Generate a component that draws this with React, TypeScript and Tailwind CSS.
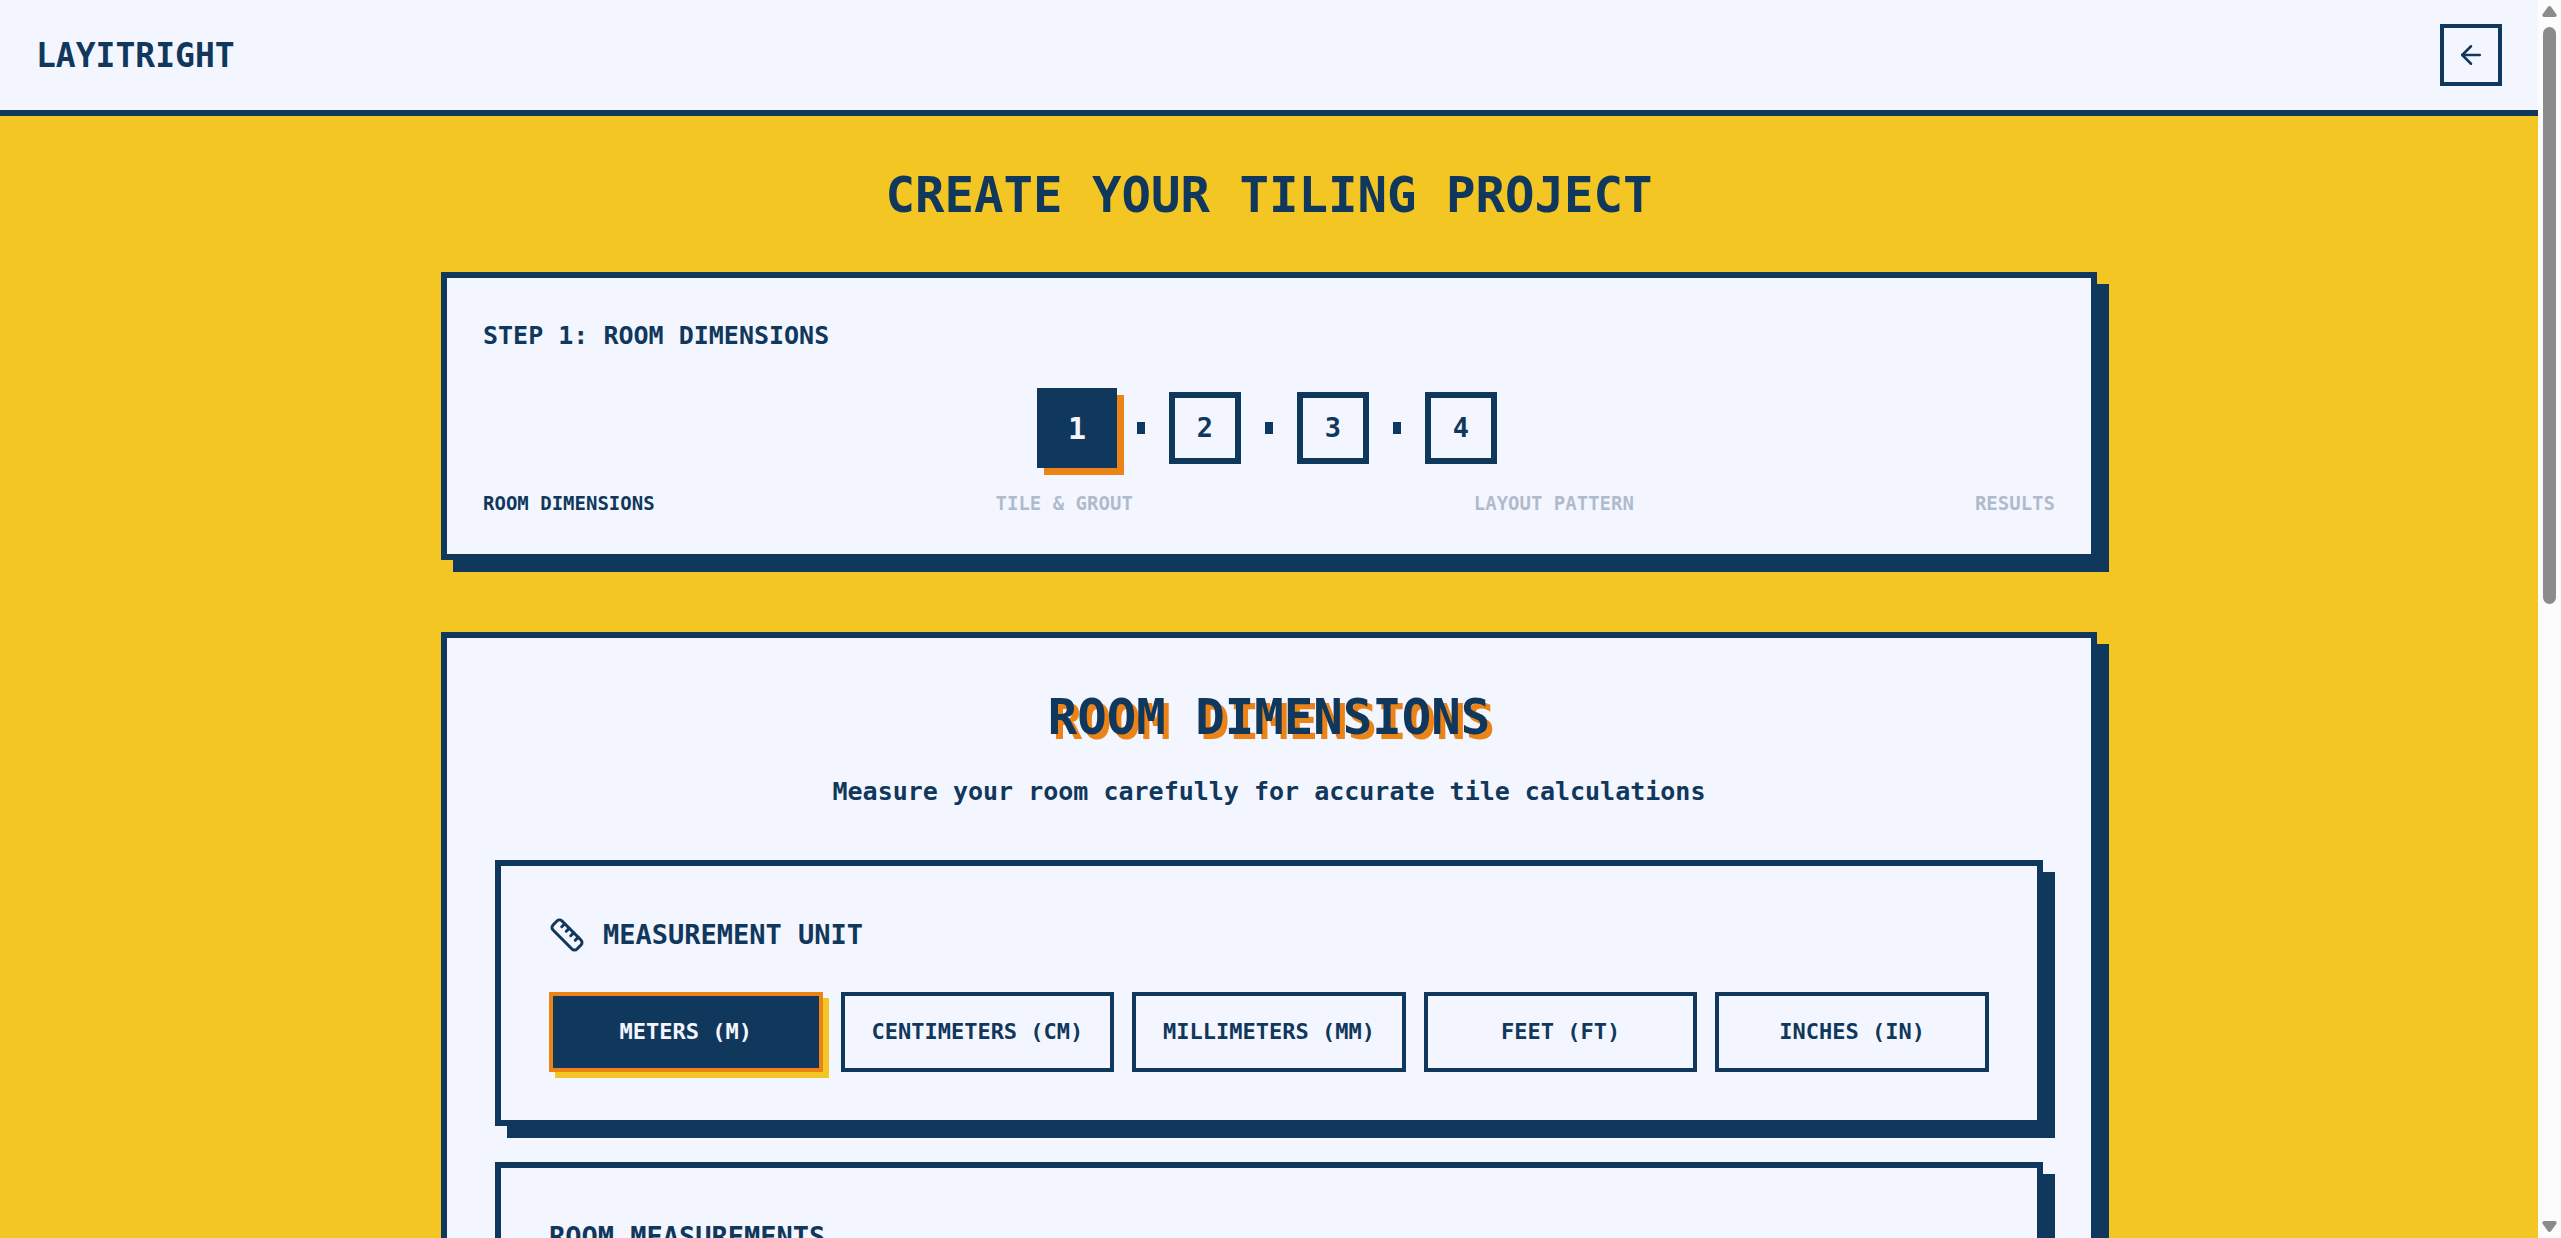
import { useState } from "react";
import { ArrowLeft, Ruler } from "lucide-react";
import clsx from "clsx";

const steps = ["Room Dimensions", "Tile & Grout", "Layout Pattern", "Results"];

const units = [
  "Meters (m)",
  "Centimeters (cm)",
  "Millimeters (mm)",
  "Feet (ft)",
  "Inches (in)",
];

const card = "border-6 border-[#10375c] bg-[#f4f6ff] shadow-[12px_12px_0_0_#10375c]";

function Header() {
  return (
    <header className="flex items-center justify-between border-b-6 border-[#10375c] bg-[#f4f6ff] px-9 py-6">
      <a href="#" className="pt-0.5 text-[33px] leading-[48px] font-bold uppercase">
        LayItRight
      </a>
      <button
        type="button"
        aria-label="Go back"
        className="flex size-[62px] items-center justify-center border-4 border-[#10375c]"
      >
        <ArrowLeft size={30} strokeWidth={2} />
      </button>
    </header>
  );
}

function Progress({ current, onSelect }: { current: number; onSelect: (n: number) => void }) {
  return (
    <section className={clsx(card, "p-9")}>
      <h2 className="text-[25px] leading-11 font-bold uppercase">
        Step {current + 1}: {steps[current]}
      </h2>
      <ol className="mt-[34px] flex items-center justify-center gap-6">
        {steps.map((step, i) => (
          <li key={step} className="flex items-center gap-6">
            {i > 0 && <span className="h-3 w-2 bg-[#10375c]" />}
            <button
              type="button"
              aria-label={step}
              onClick={() => onSelect(i)}
              className={clsx(
                "flex items-center justify-center border-6 border-[#10375c] font-bold",
                i === current
                  ? "-m-1 size-20 bg-[#10375c] text-[30px] text-[#f4f6ff] shadow-[7px_7px_0_0_#eb8317]"
                  : "size-18 text-[27px]",
              )}
            >
              {i + 1}
            </button>
          </li>
        ))}
      </ol>
      <div className="mt-6 flex justify-between text-[19px] leading-[30px] font-bold uppercase">
        {steps.map((step, i) => (
          <span key={step} className={i === current ? "" : "opacity-30"}>
            {step}
          </span>
        ))}
      </div>
    </section>
  );
}

function UnitPicker() {
  const [unit, setUnit] = useState(units[0]);
  return (
    <section className={clsx(card, "p-12")}>
      <h3 className="flex items-center gap-[18px] text-[27px] leading-[42px] font-bold uppercase">
        <Ruler size={36} strokeWidth={2} />
        Measurement Unit
      </h3>
      <div className="mt-9 grid grid-cols-5 gap-[18px]">
        {units.map((name) => (
          <button
            key={name}
            type="button"
            aria-pressed={name === unit}
            onClick={() => setUnit(name)}
            className={clsx(
              "border-4 py-[18px] text-[22px] leading-9 font-bold whitespace-nowrap uppercase",
              name === unit
                ? "border-[#eb8317] bg-[#10375c] text-[#f4f6ff] shadow-[6px_6px_0_0_#f3c623]"
                : "border-[#10375c]",
            )}
          >
            {name}
          </button>
        ))}
      </div>
    </section>
  );
}

function ScrollRail() {
  return (
    <div className="flex w-[23px] shrink-0 flex-col items-center bg-[#fcfcfc] py-1.5 text-[#8b8b8b]">
      <svg width="15" height="11" viewBox="0 0 15 11" fill="currentColor">
        <path d="M6 .8Q7.500-.6 9 .8L14.400 8.300Q15.300 10.800 13 11H2Q-.3 10.800.6 8.300Z" />
      </svg>
      <div className="mt-2.5 h-[577px] w-[13px] rounded-full bg-current" />
      <svg className="mt-auto" width="15" height="11" viewBox="0 0 15 11" fill="currentColor">
        <path d="M6 10.200Q7.500 11.600 9 10.200L14.400 2.700Q15.300.2 13 0H2Q-.3.2.6 2.700Z" />
      </svg>
    </div>
  );
}

export default function App() {
  const [current, setCurrent] = useState(0);
  return (
    <div className="flex h-screen font-['DejaVu_Sans_Mono',monospace] text-[#10375c]">
      <div className="min-w-0 flex-1 overflow-y-auto bg-[#f3c623] [scrollbar-width:none]">
        <Header />
        <main className="mx-auto max-w-[1728px] px-9 py-12">
          <h1 className="text-center text-[49px] leading-16 font-bold uppercase">
            Create Your Tiling Project
          </h1>
          <div className="mt-11 flex flex-col gap-18">
            <Progress current={current} onSelect={setCurrent} />
            <section className={clsx(card, "p-12")}>
              <h2 className="text-center text-[49px] leading-16 font-bold uppercase [text-shadow:5px_5px_0_#eb8317]">
                Room Dimensions
              </h2>
              <p className="mt-5 text-center text-[25px] leading-11 font-bold">
                Measure your room carefully for accurate tile calculations
              </p>
              <div className="mt-[46px] flex flex-col gap-9">
                <UnitPicker />
                <section className={clsx(card, "p-12")}>
                  <h3 className="text-[27px] leading-[42px] font-bold uppercase">
                    Room Measurements
                  </h3>
                </section>
              </div>
            </section>
          </div>
        </main>
      </div>
      <ScrollRail />
    </div>
  );
}
